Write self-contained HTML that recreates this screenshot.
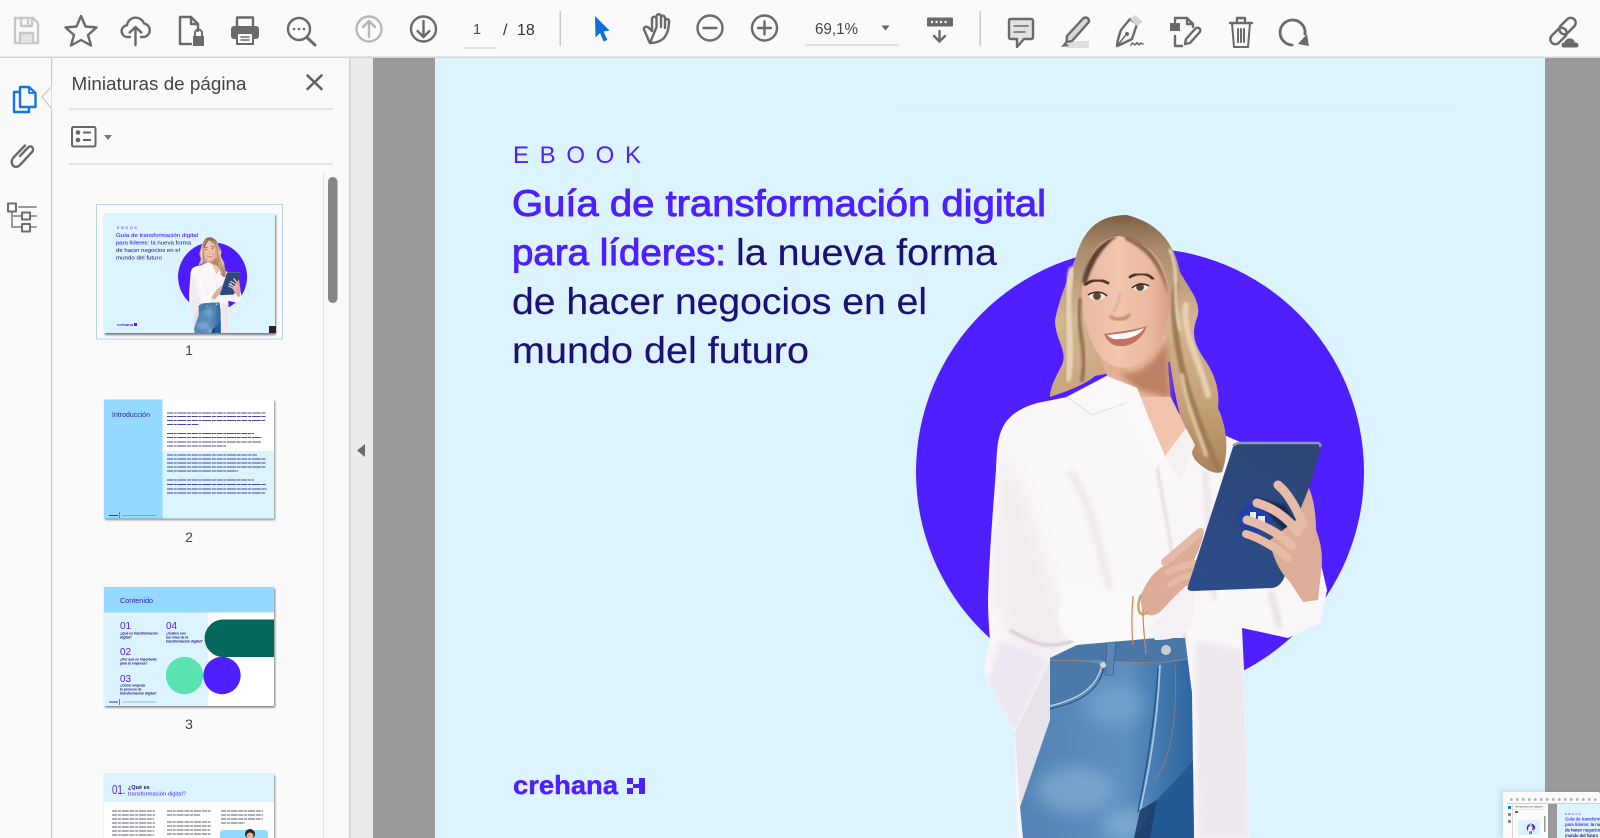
<!DOCTYPE html>
<html lang="es"><head><meta charset="utf-8"><title>Miniaturas de página</title>
<style>
html,body{margin:0;padding:0;width:1600px;height:838px;overflow:hidden;background:#fafafa}
svg{display:block;position:absolute;left:0;top:0}
text{font-family:"Liberation Sans",sans-serif}
.i{fill:none;stroke:#6a6a6a;stroke-width:2.4;stroke-linecap:round;stroke-linejoin:round}
.h{font-size:37px;letter-spacing:0}
.p{fill:#4f1fff;stroke:#4f1fff;stroke-width:.9}
.n{fill:#1d0f74;stroke:#1d0f74;stroke-width:.2}
</style></head><body>
<svg width="1600" height="838" viewBox="0 0 1600 838" xmlns="http://www.w3.org/2000/svg">
<defs>
<filter id="b0" x="-5%" y="-5%" width="110%" height="110%"><feGaussianBlur stdDeviation=".35"/></filter>
<filter id="b1" x="-30%" y="-30%" width="160%" height="160%"><feGaussianBlur stdDeviation="1"/></filter>
<filter id="b3" x="-30%" y="-30%" width="160%" height="160%"><feGaussianBlur stdDeviation="3"/></filter>
<filter id="b8" x="-40%" y="-40%" width="180%" height="180%"><feGaussianBlur stdDeviation="8"/></filter>
<linearGradient id="hair" x1="0" y1="215" x2="0" y2="475" gradientUnits="userSpaceOnUse"><stop offset="0" stop-color="#7d5e45"/><stop offset=".12" stop-color="#a78a6a"/><stop offset=".4" stop-color="#d2b591"/><stop offset=".7" stop-color="#c8a47c"/><stop offset="1" stop-color="#a98259"/></linearGradient>
<linearGradient id="face" x1="1082" y1="0" x2="1170" y2="0" gradientUnits="userSpaceOnUse"><stop offset="0" stop-color="#e9b89f"/><stop offset=".4" stop-color="#f3c6ae"/><stop offset=".8" stop-color="#eab79c"/><stop offset="1" stop-color="#d89c80"/></linearGradient>
<linearGradient id="tab" x1="1300" y1="445" x2="1200" y2="590" gradientUnits="userSpaceOnUse"><stop offset="0" stop-color="#2f4674"/><stop offset="1" stop-color="#2b4c8c"/></linearGradient>
<linearGradient id="jean" x1="1040" y1="0" x2="1195" y2="0" gradientUnits="userSpaceOnUse"><stop offset="0" stop-color="#5485b6"/><stop offset=".55" stop-color="#5f90c0"/><stop offset=".8" stop-color="#3f76ac"/><stop offset="1" stop-color="#2b659f"/></linearGradient>
<clipPath id="jc"><path d="M1077 645L1157 638H1185L1192 693L1194 838H1023L1020 807L1050 720V658Z"/></clipPath>
<clipPath id="sc"><path d="M1067 397L1037 403C1020 408 1010 415 1004 425C998 436 997 445 996 470C994 500 990 540 988 600C988 620 990 635 990 645C985 655 983 672 987 683L1015 733L1017 838H1250L1244 670L1242 628L1288 638L1320 623L1327 590L1320 560L1290 500L1240 442L1190 420L1137 390Z"/></clipPath>
<clipPath id="c1"><rect x="104" y="213" width="171" height="120"/></clipPath>
<clipPath id="cin"><rect x="1518" y="820" width="22" height="14"/></clipPath>
<g id="woman">
<circle cx="1140" cy="472" r="224" fill="#4f1fff"/>
<path d="M1067 397L1037 403C1020 408 1010 415 1004 425C998 436 997 445 996 470C994 500 990 540 988 600C988 620 990 635 990 645C985 655 983 672 987 683L1015 733L1017 838H1250L1244 670L1242 628L1288 638L1320 623L1327 590L1320 560L1290 500L1240 442L1190 420L1137 390Z" fill="#faf7f9"/>
<g clip-path="url(#sc)">
<path d="M1000 450C1030 480 1040 560 1060 600L1075 640L1050 660L1015 650L995 600Z" fill="#f1ecf0" filter="url(#b8)"/>
<path d="M1010 630C1035 645 1050 650 1075 640" fill="none" stroke="#d6cbd3" stroke-width="3" filter="url(#b1)"/>
<path d="M1060 580V640" stroke="#ded5dc" stroke-width="3" filter="url(#b3)"/>
<path d="M1015 733L1050 660V720L1020 807Z" fill="#e8e2ea"/>
<path d="M987 683L1015 733L1048 660L1000 640Z" fill="#ece7f0" filter="url(#b3)"/>
<path d="M1195 640L1198 838H1250L1244 650Z" fill="#eee8ef" filter="url(#b3)"/>
<path d="M1155 455L1170 540L1185 640" fill="none" stroke="#e9e2e8" stroke-width="4" filter="url(#b1)"/>
<path d="M1205 470L1215 600" fill="none" stroke="#e9e2e8" stroke-width="6" filter="url(#b3)"/>
<path d="M1270 590L1280 628" fill="none" stroke="#e0d8df" stroke-width="5" filter="url(#b3)"/>
<path d="M1070 470C1090 500 1100 550 1110 590" fill="none" stroke="#ede7ec" stroke-width="7" filter="url(#b3)"/>
</g>
<!-- hair -->
<path d="M1127 215C1100 215 1086 228 1078 250C1070 275 1060 295 1055 320C1055 340 1068 350 1062 365C1055 378 1050 388 1050 397C1065 392 1085 385 1095 376L1170 362C1175 400 1185 440 1195 460C1205 470 1215 475 1222 472C1230 450 1226 425 1218 408C1220 390 1215 375 1205 360C1195 345 1190 335 1198 315C1200 300 1190 290 1180 272C1175 250 1165 225 1127 215Z" fill="url(#hair)"/>
<g fill="none" stroke-linecap="round">
<path d="M1176 285C1170 320 1180 370 1195 410C1205 440 1212 455 1218 468" stroke="#a07a52" stroke-width="6" filter="url(#b1)"/>
<path d="M1186 305C1182 335 1200 360 1208 395" stroke="#e6d0b0" stroke-width="6" filter="url(#b1)"/>
<path d="M1182 375C1186 405 1198 430 1206 455" stroke="#dcc09c" stroke-width="4" filter="url(#b1)"/>
<path d="M1072 270C1062 305 1074 340 1068 378" stroke="#e6d2b4" stroke-width="7" filter="url(#b1)"/>
<path d="M1080 300C1076 330 1088 350 1082 380" stroke="#94724f" stroke-width="4" filter="url(#b1)"/>
<path d="M1170 250C1180 272 1172 300 1180 330" stroke="#e8d3b6" stroke-width="3" filter="url(#b1)"/>
</g>
<!-- neck, chest -->
<path d="M1100 358L1166 335L1170 395L1186 428L1165 456L1137 393L1108 378Z" fill="#e6b296"/>
<path d="M1105 362C1125 385 1150 372 1167 340L1170 398L1140 390Z" fill="#bc7f62" filter="url(#b3)"/>
<path d="M1140 397L1165 456L1186 428L1170 397Z" fill="#f0c4ad"/>
<!-- collar -->
<path d="M1067 397L1107 376L1137 388L1146 410L1128 402L1092 415Z" fill="#fbf8f9" stroke="#e2dadf" stroke-width=".8"/>
<path d="M1137 390L1165 456L1155 470L1125 405Z" fill="#fbf8f9"/>
<path d="M1186 428L1165 456L1180 480L1195 445Z" fill="#f5f1f3"/>
<!-- face -->
<path d="M1118 236C1098 238 1084 258 1082 288C1081 318 1090 345 1102 358C1112 369 1128 371 1142 362C1158 350 1167 332 1169 308C1172 272 1158 242 1118 236Z" fill="url(#face)"/>
<path d="M1082 282C1086 258 1100 240 1118 236C1106 244 1094 258 1086 285Z" fill="#5c4130" filter="url(#b1)"/>
<path d="M1125 236C1148 242 1164 262 1168 295C1160 268 1148 250 1125 240Z" fill="#8b6a4b" filter="url(#b1)"/>
<path d="M1085 285C1092 279 1100 279 1108 283" fill="none" stroke="#4f382b" stroke-width="2.8" stroke-linecap="round" filter="url(#b0)"/>
<path d="M1130 277C1138 272 1148 273 1153 279" fill="none" stroke="#4f382b" stroke-width="2.8" stroke-linecap="round" filter="url(#b0)"/>
<ellipse cx="1097" cy="296" rx="8.5" ry="4" fill="#efe7de"/><circle cx="1097" cy="296" r="3.9" fill="#54483b"/>
<path d="M1088 295C1094 291 1102 291 1107 296" fill="none" stroke="#3a2a22" stroke-width="1.6"/>
<ellipse cx="1140" cy="287" rx="8" ry="4" fill="#efe7de"/><circle cx="1140" cy="287" r="3.9" fill="#54483b"/>
<path d="M1132 288C1137 283 1144 283 1149 286" fill="none" stroke="#3a2a22" stroke-width="1.6"/>
<path d="M1110 316C1115 321 1126 320 1130 314" fill="none" stroke="#bf8268" stroke-width="3" filter="url(#b1)"/>
<path d="M1120 292C1119 302 1116 308 1113 312" fill="none" stroke="#e0a78c" stroke-width="2" filter="url(#b1)"/>
<path d="M1104 334C1118 332 1135 330 1147 326C1142 340 1130 347 1120 346C1112 346 1107 341 1104 334Z" fill="#c5705f"/>
<path d="M1107 335C1120 334 1134 332 1144 328C1140 335 1130 339 1120 339C1113 340 1110 338 1107 335Z" fill="#fff"/>
<!-- jeans -->
<path d="M1077 645L1157 638H1185L1192 693L1194 838H1023L1020 807L1050 720V658Z" fill="url(#jean)"/>
<g clip-path="url(#jc)">
<ellipse cx="1115" cy="705" rx="32" ry="22" fill="#85aed6" opacity=".5" filter="url(#b8)"/>
<ellipse cx="1075" cy="790" rx="40" ry="24" fill="#8fb6da" opacity=".55" filter="url(#b8)"/>
<ellipse cx="1130" cy="825" rx="30" ry="16" fill="#94bbde" opacity=".55" filter="url(#b8)"/>
<path d="M1157 800L1194 760V838H1135Z" fill="#245a94"/>
<path d="M1050 657L1077 645L1157 638H1185L1188 660L1158 664L1098 660L1050 664Z" fill="#4877a8"/>
<path d="M1050 664C1075 662 1095 660 1100 665C1100 680 1090 695 1050 705Z" fill="#4a79aa"/>
<path d="M1050 706C1075 700 1095 690 1101 668" fill="none" stroke="#cdd9e4" stroke-width="1.2"/>
<path d="M1050 709C1080 702 1098 692 1104 668" fill="none" stroke="#234e7e" stroke-width="1"/>
<path d="M1160 665C1158 710 1152 760 1140 810" fill="none" stroke="#a9c6de" stroke-width="1.8"/>
<path d="M1158 668C1156 710 1148 760 1138 812" fill="none" stroke="#244f80" stroke-width="1.2"/>
<path d="M1175 665C1178 720 1170 760 1155 780" fill="none" stroke="#b77b55" stroke-width="1" opacity=".7"/>
<path d="M1050 660L1157 663L1188 659" fill="none" stroke="#b0835f" stroke-width=".8"/>
<path d="M1107 642L1105 675H1113L1116 642Z" fill="#5a87b3" stroke="#2c5583" stroke-width=".6"/>
<circle cx="1166" cy="650" r="5" fill="#c9cfd2"/><circle cx="1103" cy="665" r="3" fill="#d4d6d2"/>
<path d="M1140 810L1134 838H1150L1157 800Z" fill="#1d3f6a" opacity=".9"/>
</g>
<!-- cuff left & right sleeve -->
<path d="M1062 583L1140 596L1155 628L1146 638L1080 643C1060 640 1056 625 1060 605Z" fill="#fbf8f9"/>
<path d="M1155 640L1150 630L1172 598L1195 590L1192 625C1180 640 1165 640 1155 640Z" fill="#f6f1f4"/>
<!-- left hand -->
<path d="M1140 596C1146 585 1150 574 1165 565C1178 553 1190 538 1203 528C1205 535 1200 548 1194 560L1192 583C1182 587 1172 600 1160 612C1152 618 1146 615 1142 610Z" fill="#dcac96"/>
<g fill="none" stroke="#e5b9a5" stroke-linecap="round">
<path d="M1165 562L1200 532" stroke-width="8"/>
<path d="M1168 572C1180 566 1192 563 1204 563" stroke-width="7"/>
<path d="M1170 585C1178 578 1186 576 1193 575" stroke-width="6"/>
</g>
<path d="M1141 595C1136 605 1138 620 1148 612" fill="none" stroke="#c9a46e" stroke-width="2.5"/>
<path d="M1133 596C1131 620 1132 635 1133 645M1143 610C1143 630 1145 640 1146 654" fill="none" stroke="#d77f50" stroke-width="1.2"/>
<!-- tablet -->
<path d="M1233 447Q1235 442 1241 442L1317 442Q1322 443 1321 448L1284 578Q1280 587 1272 588L1193 591Q1186 591 1188 586Z" fill="url(#tab)"/>
<path d="M1233 446Q1236 443 1241 443L1317 443Q1321 443 1320 447" fill="none" stroke="#8c9ab0" stroke-width="2.4"/>
<ellipse cx="1255" cy="518" rx="17" ry="15" fill="#1d41a8" transform="rotate(-25 1255 518)"/>
<path d="M1250 512h6v6h-6zM1258 516h7v6h-7z" fill="#e4ecf8"/>
<path d="M1254 497L1285 505L1296 522L1285 532Z" fill="#19233f" opacity=".8" filter="url(#b1)"/>
<!-- right hand -->
<path d="M1296 520L1309 488C1314 500 1316 515 1316 530C1322 545 1323 560 1321 572L1318 600L1303 602L1290 582C1278 570 1272 555 1270 540Z" fill="#dcad98"/>
<g fill="none" stroke-linecap="round" stroke="#e6bba7">
<path d="M1278 485C1290 495 1298 512 1303 525" stroke-width="9"/>
<path d="M1257 503C1272 507 1288 518 1298 532" stroke-width="9"/>
<path d="M1247 520C1260 524 1278 532 1292 546" stroke-width="9"/>
<path d="M1246 534C1260 538 1276 548 1288 558" stroke-width="8"/>
</g>
</g>
</defs>

<!-- backgrounds -->
<rect width="1600" height="838" fill="#fafafa"/>
<rect x="349" y="57" width="24" height="781" fill="#ebebeb"/>
<rect x="349" y="57" width="1.4" height="781" fill="#cfcfcf"/>
<rect x="373" y="58" width="1227" height="780" fill="#9a9a9a"/>
<rect x="435" y="58" width="1110" height="780" fill="#dcf4ff"/>
<rect x="0" y="56.5" width="1600" height="1.5" fill="#d4d4d4"/>
<rect x="900" y="109.5" width="555" height="1" fill="#d2eefb"/>
<rect x="51" y="58" width="1.2" height="780" fill="#cbcbcb"/>
<path d="M51 87L42 97L51 108" fill="#fafafa" stroke="#c8c8c8" stroke-width="1.2"/>
<rect x="51.6" y="86" width="2" height="23" fill="#fafafa"/>
<path d="M365 444V457L357 450.5Z" fill="#6b6b6b"/>

<!-- main page -->
<use href="#woman"/>
<text x="513" y="163" font-size="24" fill="#4f1fff" textLength="128" lengthAdjust="spacing">EBOOK</text>
<text class="h p" x="512" y="216" textLength="534" lengthAdjust="spacingAndGlyphs">Guía de transformación digital</text>
<text class="h p" x="512" y="265" textLength="214" lengthAdjust="spacingAndGlyphs">para líderes:</text>
<text class="h n" x="736" y="265" textLength="261" lengthAdjust="spacingAndGlyphs">la nueva forma</text>
<text class="h n" x="512" y="314" textLength="415" lengthAdjust="spacingAndGlyphs">de hacer negocios en el</text>
<text class="h n" x="512" y="363" textLength="297" lengthAdjust="spacingAndGlyphs">mundo del futuro</text>
<text x="513" y="794" font-size="26" font-weight="700" fill="#4f1fff" stroke="#4f1fff" stroke-width=".4" textLength="105" lengthAdjust="spacingAndGlyphs">crehana</text>
<path d="M627 778h6v6h-6zM627 788h6v6h-6zM633 784h6v4h-6zM639 778h6v16h-6z" fill="#4f1fff"/>

<!-- toolbar icons -->
<g class="i" style="stroke:#c6c6c6">
<path d="M15 18H33L38 23V43H15Z"/><path d="M21 18V26H32V18M28 20.5V23.5"/><path d="M20 43V33H33V43" style="fill:#e4e4e4"/>
</g>
<polygon class="i" points="81,16 85.5,26.5 96.5,27.5 88,35 91,45.5 81,40 71,45.5 74,35 65.5,27.5 76.5,26.5"/>
<path class="i" d="M130 37H128A5.8 5.8 0 0 1 127 25.3 8.8 8.8 0 0 1 144 23.5 6.8 6.8 0 0 1 143.5 37H141M135.5 45V27M129.7 32.5L135.5 27 141.3 32.5"/>
<path class="i" d="M191 44H180V17H191L198 24V31M191 17V24H198"/>
<path d="M193 36H204V46H193Z" fill="#6a6a6a"/><path class="i" style="stroke-width:2" d="M195 36V33A3.5 3.5 0 0 1 202 33V36"/>
<rect x="231" y="26" width="28" height="13" rx="3" fill="#6a6a6a"/><path class="i" d="M237 26V17.5H253V26"/>
<rect x="237" y="33" width="16" height="11" fill="#fafafa" stroke="#6a6a6a" stroke-width="2"/><path class="i" style="stroke-width:1.4" d="M241 37H249M241 40H249"/>
<circle class="i" cx="299" cy="29" r="11"/><path class="i" style="stroke-width:3" d="M307 37.5L315 45"/>
<circle cx="294" cy="29" r="1.3" fill="#6a6a6a"/><circle cx="299" cy="29" r="1.3" fill="#6a6a6a"/><circle cx="304" cy="29" r="1.3" fill="#6a6a6a"/>
<g class="i" style="stroke:#b8b8b8"><circle cx="369" cy="29" r="12.5"/><path d="M369 37V21M363 27L369 21 375 27"/></g>
<circle class="i" cx="423.5" cy="29" r="12.5"/><path class="i" d="M423.5 21V37M417.5 31L423.5 37 429.5 31"/>
<text x="477" y="34" font-size="14.5" fill="#4a4a4a" text-anchor="middle">1</text>
<rect x="464" y="47.5" width="32" height="1" fill="#c8c8c8"/>
<text x="503" y="35" font-size="16" fill="#333">/</text>
<text x="517" y="35" font-size="16" fill="#333">18</text>
<rect x="559.5" y="11" width="1.5" height="35" fill="#c9c9c9"/>
<path d="M595 16L609.5 30.5L603.5 31.5L607.5 40L603.5 41.5L600 33L595.5 37.5Z" fill="#0f6fd8"/>
<path class="i" d="M650 43C655 43 660 42 664 38C668 33 669 28 669 22V21C669 18.5 665 18.5 665 21V28M665 27V18C665 15 661 15 661 18V27M661 27V16.5C661 13.5 656.5 13.5 656.5 16.5V27M656.5 27V19C656.5 16 652 16 652 19V31L649 28C646 25 642.5 28 644.5 31C647 35 648 40 650 43Z"/>
<circle class="i" cx="710" cy="28" r="12.5"/><path class="i" d="M703.5 28H716.5"/>
<circle class="i" cx="764.5" cy="28" r="12.5"/><path class="i" d="M758 28H771M764.5 21.5V34.5"/>
<text x="815" y="34" font-size="15.5" fill="#444" textLength="43" lengthAdjust="spacingAndGlyphs">69,1%</text>
<path d="M881.5 25.5H889.5L885.5 30.5Z" fill="#666"/>
<rect x="805" y="44.5" width="94" height="1" fill="#c8c8c8"/>
<rect x="927" y="17.5" width="26" height="9" rx="1" fill="#6a6a6a"/>
<path d="M931 22H949" stroke="#fafafa" stroke-width="2.2" stroke-dasharray="2 2.5"/>
<path class="i" d="M939.5 31V41M934 36L939.5 41.5 945 36"/>
<rect x="979.5" y="11" width="1.5" height="35" fill="#c9c9c9"/>
<path class="i" style="fill:#e2e2e2" d="M1011 19H1031Q1033 19 1033 21V37Q1033 39 1031 39H1024L1017 47V39H1011Q1009 39 1009 37V21Q1009 19 1011 19Z"/>
<path class="i" style="stroke-width:1.6" d="M1014 26H1028M1014 32H1025"/>
<rect x="1066" y="41" width="23" height="7" fill="#dedede"/>
<path d="M1061 47L1065 42L1069 46Z" fill="#6a6a6a"/>
<path class="i" style="fill:#d6d6d6" d="M1067 36L1083 18.5Q1086 16.5 1088 18.5Q1090 21 1088 23L1072 41L1066.5 42Z"/>
<path class="i" d="M1130 19L1137 24L1132 39C1126 42 1122 44 1117 46C1117 41 1119 36 1121 30Z"/>
<path d="M1130 19L1135 15L1143 22L1137 26Z" fill="#d6d6d6"/><path class="i" style="stroke-width:1.6" d="M1117 46L1125 36M1131 45C1133 40 1134 47 1136 44C1138 40 1138 47 1140 44C1141 42 1142 44 1143 44"/>
<circle cx="1127" cy="34" r="2" fill="#6a6a6a"/>
<path d="M1170 23H1180V31H1170Z" fill="#6a6a6a"/>
<path class="i" d="M1175 22V18H1187L1193 24V27M1187 18V24H1193M1175 36V46H1182"/>
<path class="i" d="M1185 44L1186 39L1196 28Q1198 27 1200 29Q1201 31 1199 33L1190 43Z"/>
<path class="i" d="M1230 23H1252M1237 22V18H1245V22"/><path class="i" style="stroke-width:2" d="M1232 23L1234 47H1248L1250 23M1238 29V42M1241 29V42M1244 29V42"/>
<path class="i" style="stroke-width:2.8" d="M1292 45A12.5 12.5 0 1 1 1305 34"/><path d="M1298 44L1309 46L1307 34Z" fill="#6a6a6a"/>
<rect class="i" x="1549" y="31" width="19" height="10" rx="5" transform="rotate(-45 1558.5 36)"/>
<rect class="i" x="1558" y="21" width="19" height="10" rx="5" transform="rotate(-45 1567.5 26)"/>
<path d="M1564 48Q1561 48 1561 45Q1561 42 1564 42Q1566 37 1571 38Q1575 39 1575 42Q1579 42 1579 45Q1579 48 1576 48Z" fill="#6a6a6a" stroke="#fafafa" stroke-width="1"/>

<!-- rail icons -->
<g class="i" style="stroke:#1473e6"><path d="M20 92H14V112H29V107"/><path style="fill:#fafafa" d="M20 107V87H29L35.5 93V107Z"/><path style="stroke-width:1.8" d="M29 87V93H35.5"/></g>
<path class="i" d="M20 156L28 147.5C31 144 35 149 32 152L20 165C15 170 9 164 13 158L25 145.5"/>
<g class="i" style="stroke:#6e6e6e;stroke-width:2"><path style="stroke:#9a9a9a" d="M12 212V227H22M12 216H22M19 207H36M30 216H36M30 227H36"/><rect x="8" y="203.5" width="8" height="8"/><rect x="22" y="212.5" width="8" height="7"/><rect x="22" y="224" width="8" height="7.5"/></g>

<!-- panel head -->
<text x="71.5" y="90" font-size="18.5" fill="#444" textLength="175" lengthAdjust="spacingAndGlyphs">Miniaturas de página</text>
<path d="M307.5 75.5L321.5 89M321.5 75.5L307.5 89" stroke="#5f5f5f" stroke-width="2.6" stroke-linecap="round"/>
<rect x="69" y="108.5" width="264" height="1.2" fill="#d8d4d4"/>
<rect x="72" y="127" width="23.5" height="19.5" rx="1.5" fill="none" stroke="#666" stroke-width="2"/>
<circle cx="78" cy="132.5" r="2.3" fill="#666"/><circle cx="78" cy="140" r="2.3" fill="#666"/>
<path d="M83 132.5H91M83 140H91" stroke="#666" stroke-width="2"/>
<path d="M104 135H112L108 140Z" fill="#777"/>
<rect x="69" y="163.5" width="264" height="1.2" fill="#d8d4d4"/>
<rect x="323" y="172" width="1" height="666" fill="#e2e2e2"/>
<rect x="328" y="177" width="9.5" height="126" rx="4.7" fill="#868686"/>

<!-- thumb 1 -->
<rect x="96.5" y="204.5" width="186" height="134.5" fill="#fcfcfc" stroke="#b9d2f0"/>
<rect x="105" y="215" width="171" height="120" fill="#777" filter="url(#b1)"/>
<rect x="104" y="213" width="171" height="120" fill="#dcf4ff"/>
<g filter="url(#b0)">
<g clip-path="url(#c1)"><use href="#woman" transform="translate(37,204.1) scale(.154)"/></g>
<rect x="269" y="326" width="7" height="7" fill="#2a2228"/>
<text x="117" y="229" font-size="3.8" fill="#4f1fff" textLength="20" lengthAdjust="spacing">EBOOK</text>
<g font-size="5.8">
<text x="116" y="237" fill="#4f1fff" stroke="#4f1fff" stroke-width=".1" textLength="82" lengthAdjust="spacingAndGlyphs">Guía de transformación digital</text>
<text x="116" y="244.5" fill="#4f1fff" stroke="#4f1fff" stroke-width=".1" textLength="33" lengthAdjust="spacingAndGlyphs">para líderes:</text>
<text x="151" y="244.5" fill="#1d0f74" textLength="40" lengthAdjust="spacingAndGlyphs">la nueva forma</text>
<text x="116" y="252" fill="#1d0f74" textLength="64" lengthAdjust="spacingAndGlyphs">de hacer negocios en el</text>
<text x="116" y="259.5" fill="#1d0f74" textLength="46" lengthAdjust="spacingAndGlyphs">mundo del futuro</text>
</g>
<text x="117" y="326" font-size="4" font-weight="700" fill="#4f1fff" textLength="16" lengthAdjust="spacingAndGlyphs">crehana</text>
<rect x="134" y="323" width="3" height="3" fill="#4f1fff"/>
</g>
<text x="189" y="355" font-size="14" fill="#444" text-anchor="middle">1</text>

<!-- thumb 2 -->
<rect x="105" y="401" width="170" height="119" fill="#8a8a8a" filter="url(#b1)"/>
<rect x="104" y="399.5" width="170" height="119" fill="#fff"/>
<rect x="104" y="399.5" width="58.5" height="119" fill="#94d9ff"/>
<rect x="162.5" y="451" width="111.5" height="67.5" fill="#dcf4ff"/>
<g filter="url(#b0)">
<text x="112" y="417" font-size="7.2" fill="#2c1f9c" textLength="38" lengthAdjust="spacingAndGlyphs">Introducción</text>
<g stroke="#241c8a" stroke-width="1.1" stroke-dasharray="6 .7 3 .7 9 .7 4 .7" opacity=".8">
<path d="M167 413H266M167 416.5H266M167 420.5H265M167 424.5H199"/>
<path d="M167 433.5H254M167 437.5H262M167 442H261M167 446H226"/>
<path d="M167 455H257M167 459H266M167 463H266M167 467H266M167 471H238"/>
<path d="M167 480H254M167 484.5H266M167 489H267M167 493H265"/>
</g>
<path d="M109 515.5H118" stroke="#4f1fff" stroke-width="1"/><rect x="119" y="512" width="1" height="6" fill="#6a7ad0"/><path d="M122 515.5H156" stroke="#5b78bd" stroke-width=".8" opacity=".7"/>
</g>
<text x="189" y="542" font-size="14" fill="#444" text-anchor="middle">2</text>

<!-- thumb 3 -->
<rect x="105" y="588.5" width="170" height="119" fill="#7c7c7c" filter="url(#b1)"/>
<rect x="104" y="587" width="170" height="119" fill="#fff"/>
<rect x="104" y="587" width="104" height="119" fill="#dcf4ff"/>
<rect x="104" y="587" width="170" height="25.5" fill="#94d9ff"/>
<path d="M274 619.5H222A18.8 18.8 0 0 0 222 657H274Z" fill="#04695c"/>
<circle cx="184.5" cy="675.5" r="18.7" fill="#5ae3b1"/>
<circle cx="222" cy="675.5" r="18.7" fill="#4f1fff"/>
<g filter="url(#b0)">
<text x="120" y="603" font-size="7.2" fill="#2c1f9c" textLength="33" lengthAdjust="spacingAndGlyphs">Contenido</text>
<g font-size="10" fill="#4f1fff"><text x="120" y="629">01</text><text x="120" y="655">02</text><text x="120" y="682">03</text><text x="166" y="629">04</text></g>
<g font-size="3.3" font-weight="700" fill="#1d0f74">
<text x="120" y="634.5">¿Qué es transformación</text><text x="120" y="638.5">digital?</text>
<text x="120" y="660.5">¿Por qué es importante</text><text x="120" y="664.5">para tu empresa?</text>
<text x="120" y="686.5">¿Cómo empezar</text><text x="120" y="690.5">tu proceso de</text><text x="120" y="694.5">transformación digital?</text>
<text x="166" y="634.5">¿Cuáles son</text><text x="166" y="638.5">los retos de la</text><text x="166" y="642.5">transformación digital?</text>
</g>
<path d="M109 702H118" stroke="#4f1fff" stroke-width="1"/><rect x="119" y="699" width="1" height="6" fill="#6a7ad0"/><path d="M122 702H156" stroke="#5b78bd" stroke-width=".8" opacity=".7"/>
</g>
<text x="189" y="729" font-size="14" fill="#444" text-anchor="middle">3</text>

<!-- thumb 4 -->
<rect x="105" y="775" width="170" height="70" fill="#8a8a8a" filter="url(#b1)"/>
<rect x="104" y="773" width="170" height="70" fill="#fff"/>
<rect x="104" y="773" width="170" height="29" fill="#dcf4ff"/>
<g filter="url(#b0)">
<text x="112" y="794" font-size="13" fill="#4f1fff" textLength="13.5" lengthAdjust="spacingAndGlyphs">01.</text>
<text x="128" y="789" font-size="5.5" font-weight="700" fill="#1d0f74">¿Qué es</text>
<text x="128" y="795.5" font-size="5.8" fill="#4f1fff" textLength="58" lengthAdjust="spacingAndGlyphs">transformación digital?</text>
<g stroke="#2a2440" stroke-width="1" stroke-dasharray="5 .8 3 .8 7 .8" opacity=".75">
<path d="M112 811H155M112 815H155M112 819H154M112 823H155M112 827H155M112 831H154M112 835H154"/>
<path d="M167 811H211M167 815H200M167 822H211M167 826H211M167 830H210M167 834H211"/>
<path d="M221 811H263M221 815H263M221 819H263M221 823H245"/>
</g>
</g>
<path d="M223 830H265Q268 830 268 833V838H220V833Q220 830 223 830Z" fill="#94d9ff"/>
<circle cx="250" cy="834" r="5" fill="#2e2320"/><circle cx="250" cy="836" r="3.5" fill="#e2b49c"/>

<!-- inset screenshot bottom right -->
<rect x="1500" y="790" width="100" height="48" rx="3" fill="#6a8aa0" opacity=".22" filter="url(#b3)"/>
<rect x="1503" y="792" width="97" height="46" rx="2" fill="#fbfbfb"/>
<g filter="url(#b0)">
<path d="M1510 799.500H1600" stroke="#b0b0b0" stroke-width="2.500" stroke-dasharray="2.500 3.500"/>
<rect x="1507" y="803" width="93" height="1" fill="#d0d0d0"/>
<rect x="1512" y="804" width=".8" height="34" fill="#d0d0d0"/>
<rect x="1508" y="806" width="3" height="3" fill="#1473e6"/><rect x="1508" y="813" width="3" height="3" fill="#888"/><rect x="1508" y="820" width="3" height="3" fill="#888"/>
<text x="1515" y="807.500" font-size="3" fill="#555">Miniaturas de página</text>
<rect x="1513" y="809" width="33" height=".6" fill="#ddd"/>
<rect x="1515" y="811" width="3" height="2" fill="#666"/>
<rect x="1544" y="816" width="1.500" height="16" fill="#9a9a9a"/>
<rect x="1518" y="820" width="22" height="15" fill="#dcf4ff"/>
<g clip-path="url(#cin)"><use href="#woman" transform="translate(1509.300,819) scale(.019)"/></g>
<rect x="1548" y="804" width="9" height="34" fill="#9a9a9a"/>
<rect x="1557" y="804" width="43" height="34" fill="#dcf4ff"/>
<text x="1565" y="815" font-size="3" fill="#4f1fff" textLength="16" lengthAdjust="spacing">EBOOK</text>
<g font-size="4.400" stroke-width=".1">
<text x="1565" y="820.500" fill="#4f1fff" stroke="#4f1fff">Guía de transformación</text>
<text x="1565" y="826" fill="#4f1fff" stroke="#4f1fff">para líderes: <tspan fill="#1d0f74" stroke="#1d0f74">la nueva</tspan></text>
<text x="1565" y="831.500" fill="#1d0f74" stroke="#1d0f74">de hacer negocios</text>
<text x="1565" y="837" fill="#1d0f74" stroke="#1d0f74">mundo del futuro</text>
</g>
</g>
</svg>
</body></html>
